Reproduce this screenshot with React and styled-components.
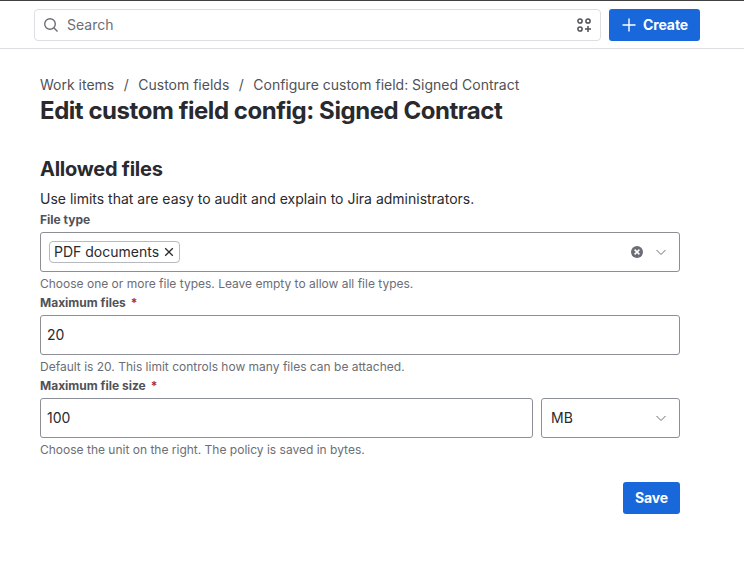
import React from "react";
import styled, { createGlobalStyle } from "styled-components";

const GlobalStyle = createGlobalStyle`
  * {
    box-sizing: border-box;
  }
  body {
    margin: 0;
    background: #fff;
    color: #292a2e;
    font-family: Inter, sans-serif;
    font-size: 14px;
    line-height: 20px;
  }
`;

const TopBar = styled.header`
  display: flex;
  align-items: center;
  gap: 8px;
  height: 49px;
  padding: 0 44px 0 34px;
  border-top: 1px solid #424242;
  border-bottom: 1px solid #dddee1;
`;

const SearchBox = styled.div`
  display: flex;
  flex: 1;
  align-items: center;
  height: 32px;
  margin-top: 1px;
  padding: 0 8px;
  border: 1px solid #dddee1;
  border-radius: 4px;
  color: #6b6e76;
`;

const SearchText = styled.span`
  flex: 1;
  margin-left: 8px;
  font-size: 14px;
`;

const Button = styled.button`
  display: flex;
  align-items: center;
  justify-content: center;
  gap: 6px;
  width: ${(props) => props.$width};
  height: 32px;
  padding: 0;
  border: 0;
  border-radius: 3px;
  background: #1868db;
  color: #fff;
  font: 650 14px/20px Inter, sans-serif;
  letter-spacing: -0.08px;
`;

const CreateButton = styled(Button)`
  margin-top: 1px;
`;

const Page = styled.main`
  width: 680px;
  padding: 26px 0 0 40px;
`;

const Breadcrumbs = styled.nav`
  display: flex;
  color: #505258;
`;

const Separator = styled.span`
  width: 8px;
  margin: 0 8px;
  text-align: center;
`;

const Title = styled.h1`
  margin: 2px 0 0;
  font-size: 24px;
  font-weight: 650;
  letter-spacing: -0.45px;
  line-height: 28px;
`;

const SectionTitle = styled.h2`
  margin: 32px 0 0;
  font-size: 20px;
  font-weight: 650;
  letter-spacing: -0.25px;
  line-height: 24px;
`;

const Description = styled.p`
  margin: 8px 0 0;
`;

const Field = styled.div`
  display: flex;
  flex-direction: column;
  gap: 4px;
  margin-top: 3px;
`;

const Label = styled.label`
  color: #505258;
  font-size: 12px;
  font-weight: 650;
  line-height: 16px;
`;

const Required = styled.span`
  margin-left: 5px;
  color: #ae2e24;
`;

const HelperText = styled.div`
  color: #6b6e76;
  font-size: 12px;
  line-height: 16px;
`;

const ControlRow = styled.div`
  display: flex;
  gap: 8px;
`;

const Control = styled.div`
  display: flex;
  flex: ${(props) => (props.$width ? "none" : 1)};
  align-items: center;
  width: ${(props) => props.$width || "auto"};
  height: 40px;
  padding: ${(props) => props.$padding || "0 6px"};
  border: 1px solid #8c8f97;
  border-radius: 3px;
`;

const Tag = styled.span`
  display: flex;
  align-items: center;
  gap: 5px;
  height: 22px;
  padding: 0 5px 0 4px;
  border: 1px solid #b7b9be;
  border-radius: 4px;
`;

const Indicators = styled.div`
  display: flex;
  align-items: center;
  gap: 12px;
  margin-left: auto;
`;

const Actions = styled.div`
  display: flex;
  justify-content: flex-end;
  margin-top: 24px;
`;

const SearchIcon = () => (
  <svg width="16" height="16" viewBox="0 0 16 16" fill="none" stroke="#6b6e76" strokeWidth="1.4">
    <circle cx="7" cy="7" r="5.3" />
    <path d="M10.8 10.8l3.7 3.7" />
  </svg>
);

const AppsAddIcon = () => (
  <svg width="16" height="16" viewBox="0 0 16 16" fill="none" stroke="#505258" strokeWidth="1.5">
    <circle cx="4" cy="4" r="2.1" />
    <circle cx="12" cy="4" r="2.1" />
    <circle cx="4" cy="12" r="2.1" />
    <path d="M12 9v6M9 12h6" />
  </svg>
);

const PlusIcon = () => (
  <svg width="16" height="16" viewBox="0 0 16 16" fill="none" stroke="#fff" strokeWidth="1.4">
    <path d="M8 1.5v13M1.5 8h13" />
  </svg>
);

const CloseIcon = () => (
  <svg width="10" height="10" viewBox="0 0 10 10" fill="none" stroke="#292a2e" strokeWidth="1.3">
    <path d="M1.2 1.2l7.6 7.6M8.8 1.2L1.2 8.8" />
  </svg>
);

const ClearIcon = () => (
  <svg width="12" height="12" viewBox="0 0 12 12">
    <circle cx="6" cy="6" r="6" fill="#6b6e76" />
    <path d="M3.6 3.6l4.8 4.8M8.4 3.6L3.6 8.4" stroke="#fff" strokeWidth="1.5" />
  </svg>
);

const ChevronIcon = () => (
  <svg width="12" height="12" viewBox="0 0 12 12" fill="none" stroke="#6b6e76" strokeWidth="1">
    <path d="M1.5 4L6 8.5 10.5 4" />
  </svg>
);

const App = () => {
  const crumbs = [
    "Work items",
    "Custom fields",
    "Configure custom field: Signed Contract",
  ];

  return (
    <>
      <GlobalStyle />
      <TopBar>
        <SearchBox>
          <SearchIcon />
          <SearchText>Search</SearchText>
          <AppsAddIcon />
        </SearchBox>
        <CreateButton $width="91px">
          <PlusIcon />
          Create
        </CreateButton>
      </TopBar>
      <Page>
        <Breadcrumbs>
          {crumbs.map((crumb, i) => (
            <React.Fragment key={crumb}>
              {i > 0 && <Separator>/</Separator>}
              <span>{crumb}</span>
            </React.Fragment>
          ))}
        </Breadcrumbs>
        <Title>Edit custom field config: Signed Contract</Title>
        <SectionTitle>Allowed files</SectionTitle>
        <Description>
          Use limits that are easy to audit and explain to Jira administrators.
        </Description>
        <Field>
          <Label>File type</Label>
          <ControlRow>
            <Control $padding="0 12px 0 8px">
              <Tag>
                PDF documents
                <CloseIcon />
              </Tag>
              <Indicators>
                <ClearIcon />
                <ChevronIcon />
              </Indicators>
            </Control>
          </ControlRow>
          <HelperText>
            Choose one or more file types. Leave empty to allow all file types.
          </HelperText>
        </Field>
        <Field>
          <Label>
            Maximum files
            <Required>*</Required>
          </Label>
          <ControlRow>
            <Control>20</Control>
          </ControlRow>
          <HelperText>
            Default is 20. This limit controls how many files can be attached.
          </HelperText>
        </Field>
        <Field>
          <Label>
            Maximum file size
            <Required>*</Required>
          </Label>
          <ControlRow>
            <Control>100</Control>
            <Control $width="139px" $padding="0 12px 0 9px">
              MB
              <Indicators>
                <ChevronIcon />
              </Indicators>
            </Control>
          </ControlRow>
          <HelperText>
            Choose the unit on the right. The policy is saved in bytes.
          </HelperText>
        </Field>
        <Actions>
          <Button $width="57px">Save</Button>
        </Actions>
      </Page>
    </>
  );
};

export default App;
